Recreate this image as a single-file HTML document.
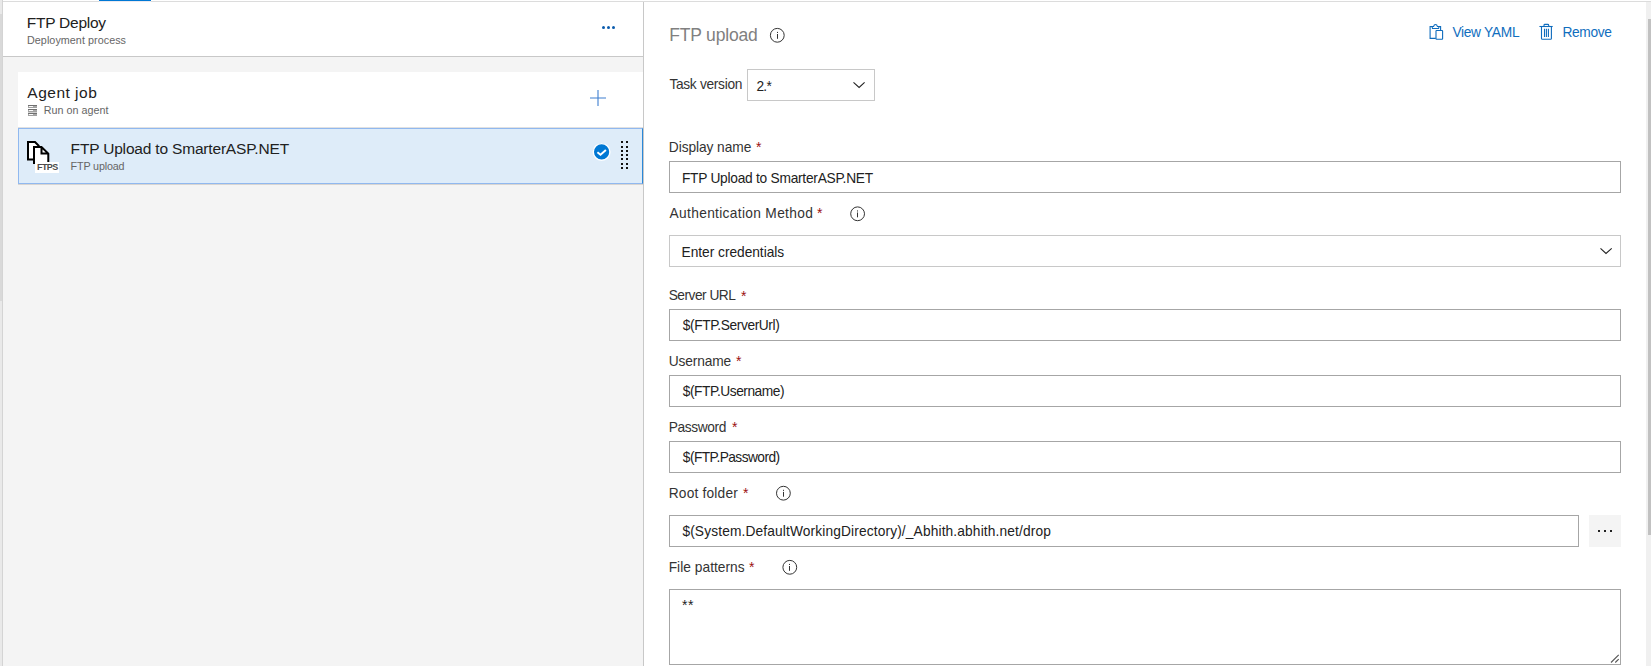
<!DOCTYPE html>
<html><head><meta charset="utf-8"><style>
html,body{margin:0;padding:0;width:1651px;height:666px;overflow:hidden;background:#fff;position:relative}
.t{position:absolute;white-space:nowrap;font-family:"Liberation Sans",sans-serif;line-height:24px}
.r{position:absolute}
</style></head><body>
<div class="r" style="left:3px;top:1px;width:1648px;height:1px;background:#dcdcdc"></div>
<div class="r" style="left:99px;top:0px;width:52px;height:1px;background:#0078d4"></div>
<div class="r" style="left:99px;top:1px;width:52px;height:1px;background:#ece9ee"></div>
<div class="r" style="left:0px;top:0px;width:2px;height:666px;background:#e9e9e9"></div>
<div class="r" style="left:0px;top:14px;width:2px;height:287px;background:#d9d9d9"></div>
<div class="r" style="left:2px;top:0px;width:1px;height:666px;background:#d4d4d4"></div>
<div class="r" style="left:3px;top:57px;width:640px;height:609px;background:#f4f4f4"></div>
<div class="r" style="left:3px;top:2px;width:640px;height:54px;background:#fff"></div>
<div class="r" style="left:3px;top:56px;width:640px;height:1px;background:#c8c8c8"></div>
<div class="t" style="left:26.8px;top:11px;font-size:15.5px;letter-spacing:-0.256px;color:#212121;">FTP Deploy</div>
<div class="t" style="left:27.0px;top:28px;font-size:10.75px;letter-spacing:0.059px;color:#666666;">Deployment process</div>
<div class="r" style="left:602.0px;top:26px;width:3px;height:3px;border-radius:50%;background:#0b5cad"></div>
<div class="r" style="left:607.0px;top:26px;width:3px;height:3px;border-radius:50%;background:#0b5cad"></div>
<div class="r" style="left:612.0px;top:26px;width:3px;height:3px;border-radius:50%;background:#0b5cad"></div>
<div class="r" style="left:643px;top:2px;width:1px;height:664px;background:#c8c8c8"></div>
<div class="r" style="left:18px;top:72px;width:625px;height:55px;background:#fff"></div>
<div class="r" style="left:18px;top:127px;width:625px;height:1px;background:#e1e1e1"></div>
<div class="t" style="left:27.3px;top:81px;font-size:15.5px;letter-spacing:0.5px;color:#212121;">Agent job</div>
<div class="t" style="left:43.7px;top:98px;font-size:10.75px;letter-spacing:0.027px;color:#666666;">Run on agent</div>
<div class="r" style="left:28px;top:105px;width:9px;height:1px;background:#707070"></div>
<div class="r" style="left:28px;top:106px;width:9px;height:1px;background:#a8a8a8"></div>
<div class="r" style="left:29px;top:106px;width:4px;height:1px;background:#fafafa"></div>
<div class="r" style="left:28px;top:107px;width:9px;height:1px;background:#a0a0a0"></div>
<div class="r" style="left:28px;top:109px;width:9px;height:1px;background:#707070"></div>
<div class="r" style="left:28px;top:110px;width:9px;height:1px;background:#a8a8a8"></div>
<div class="r" style="left:29px;top:110px;width:4px;height:1px;background:#fafafa"></div>
<div class="r" style="left:28px;top:111px;width:9px;height:1px;background:#a0a0a0"></div>
<div class="r" style="left:28px;top:113px;width:9px;height:1px;background:#707070"></div>
<div class="r" style="left:28px;top:114px;width:9px;height:1px;background:#a8a8a8"></div>
<div class="r" style="left:29px;top:114px;width:4px;height:1px;background:#fafafa"></div>
<div class="r" style="left:28px;top:115px;width:9px;height:1px;background:#a0a0a0"></div>
<div class="r" style="left:28px;top:112px;width:9px;height:1px;background:#d0d0d0"></div>
<svg class="r" style="left:586px;top:86px" width="24" height="24" viewBox="0 0 24 24"><path d="M4,12 H20 M12,4 V20" stroke="#3f7fd0" stroke-width="1.1"/></svg>
<div class="r" style="left:18px;top:128px;width:625px;height:56px;background:#deecf9;border:1px solid #90b8ef;border-right-color:#2b88d8;box-sizing:border-box"></div>
<div class="r" style="left:18px;top:184px;width:625px;height:1px;background:#d8d5d2"></div>
<div class="t" style="left:70.6px;top:137px;font-size:15.5px;letter-spacing:-0.181px;color:#212121;">FTP Upload to SmarterASP.NET</div>
<div class="t" style="left:70.6px;top:154px;font-size:10.75px;letter-spacing:-0.156px;color:#666666;">FTP upload</div>
<svg class="r" style="left:592px;top:142px" width="20" height="20" viewBox="0 0 20 20"><circle cx="9.6" cy="9.9" r="8.3" fill="#0078d4" stroke="#fff" stroke-width="1.4"/><path d="M5.4 10.2 L8.5 12.7 L13.9 8" fill="none" stroke="#fff" stroke-width="2"/></svg>
<div class="r" style="left:621px;top:141px;width:2px;height:2px;background:#111"></div>
<div class="r" style="left:626px;top:141px;width:2px;height:2px;background:#111"></div>
<div class="r" style="left:621px;top:146px;width:2px;height:2px;background:#111"></div>
<div class="r" style="left:626px;top:146px;width:2px;height:2px;background:#111"></div>
<div class="r" style="left:621px;top:150px;width:2px;height:2px;background:#111"></div>
<div class="r" style="left:626px;top:150px;width:2px;height:2px;background:#111"></div>
<div class="r" style="left:621px;top:154px;width:2px;height:2px;background:#111"></div>
<div class="r" style="left:626px;top:154px;width:2px;height:2px;background:#111"></div>
<div class="r" style="left:621px;top:158px;width:2px;height:2px;background:#111"></div>
<div class="r" style="left:626px;top:158px;width:2px;height:2px;background:#111"></div>
<div class="r" style="left:621px;top:163px;width:2px;height:2px;background:#111"></div>
<div class="r" style="left:626px;top:163px;width:2px;height:2px;background:#111"></div>
<div class="r" style="left:621px;top:167px;width:2px;height:2px;background:#111"></div>
<div class="r" style="left:626px;top:167px;width:2px;height:2px;background:#111"></div>
<svg class="r" style="left:20px;top:130px" width="50" height="50" viewBox="0 0 50 50">
<path d="M8,29.5 V12 H15 L19,16 V29.5 Z" fill="#fff"/>
<path d="M7,29.5 H13.5 M8,30.5 V11 M7,12 H15 L19.2,16.2" fill="none" stroke="#000" stroke-width="2"/>
<path d="M14,34 V17 H21.5 L28.3,23.6 V34 Z" fill="#fff"/>
<path d="M14,34 V16 M13,17 H21.5 L28.3,23.6 V32 M21.5,17 V23.6 H28.3" fill="none" stroke="#000" stroke-width="2"/>
<rect x="15" y="32" width="24" height="11" fill="#fff"/>
</svg>
<div class="t" style="left:37px;top:159px;font-size:9px;line-height:16px;font-weight:bold;letter-spacing:-0.6px;color:#4a4a4a">FTPS</div>
<div class="t" style="left:669.2px;top:23px;font-size:17.5px;letter-spacing:-0.167px;color:#808080;">FTP upload</div>
<svg class="r" style="left:768px;top:26px" width="18" height="18" viewBox="0 0 18 18"><circle cx="9.30" cy="9.30" r="6.9" fill="none" stroke="#333" stroke-width="1"/><rect x="9" y="8.00" width="1" height="4.8" fill="#333"/><rect x="9" y="5.90" width="1" height="1.1" fill="#333"/></svg>
<svg class="r" style="left:1424px;top:20px" width="24" height="24" viewBox="0 0 24 24"><g fill="none" stroke="#0f6cbd" stroke-width="1.1"><path d="M11.8,18.4 H6.1 V6.5 H9.6 C9.9,5 10.5,4.5 11.5,4.5 C12.5,4.5 13.1,5 13.4,6.5 H16.6 V10.2"/><path d="M8,6.7 L8.5,8.5 H14.6 L15.1,6.7"/><rect x="12" y="10.5" width="6.6" height="8.8" rx="0.6"/></g></svg>
<div class="t" style="left:1452.4px;top:21px;font-size:13.75px;letter-spacing:-0.3px;color:#106ebe;">View YAML</div>
<svg class="r" style="left:1534px;top:20px" width="24" height="24" viewBox="0 0 24 24"><g fill="none" stroke="#0f6cbd" stroke-width="1.1"><path d="M5.4,6.5 H18.7"/><path d="M10,6.5 V5.3 Q10,4.4 10.9,4.4 H13.8 Q14.7,4.4 14.7,5.3 V6.5"/><path d="M7.5,6.5 V18.5 Q7.5,19.3 8.3,19.3 H16.6 Q17.4,19.3 17.4,18.5 V6.5"/><path d="M10.5,8.8 V16.9 M12.4,8.8 V16.9 M14.4,8.8 V16.9"/></g></svg>
<div class="t" style="left:1562.4px;top:21px;font-size:13.75px;letter-spacing:-0.34px;color:#106ebe;">Remove</div>
<div class="t" style="left:669.4px;top:73px;font-size:13.75px;letter-spacing:-0.309px;color:#333333;">Task version</div>
<div class="r" style="left:747px;top:69px;width:128px;height:32px;border:1px solid #c8c8c8;box-sizing:border-box;background:#fff"></div>
<div class="t" style="left:756.4px;top:75px;font-size:13.75px;letter-spacing:-0.7px;color:#212121;">2.*</div>
<svg class="r" style="left:850px;top:78px" width="18" height="12" viewBox="0 0 18 12"><path d="M3.5,4.3 L9.1,9.4 L14.6,4.3" fill="none" stroke="#222" stroke-width="1.1"/></svg>
<div class="t" style="left:668.8px;top:136px;font-size:13.75px;letter-spacing:-0.073px;color:#333333;">Display name</div>
<div class="t" style="left:756px;top:135px;font-size:14px;line-height:24px;color:#9a1010">*</div>
<div class="r" style="left:669px;top:161px;width:952px;height:32px;border:1px solid #a6a6a6;box-sizing:border-box;background:#fff"></div>
<div class="t" style="left:681.9px;top:167px;font-size:13.75px;letter-spacing:-0.256px;color:#212121;">FTP Upload to SmarterASP.NET</div>
<div class="t" style="left:669.6px;top:202px;font-size:13.75px;letter-spacing:0.32px;color:#333333;">Authentication Method</div>
<div class="t" style="left:817px;top:201px;font-size:14px;line-height:24px;color:#9a1010">*</div>
<svg class="r" style="left:848px;top:204px" width="18" height="18" viewBox="0 0 18 18"><circle cx="9.60" cy="9.80" r="6.9" fill="none" stroke="#333" stroke-width="1"/><rect x="9" y="8.50" width="1" height="4.8" fill="#333"/><rect x="9" y="6.40" width="1" height="1.1" fill="#333"/></svg>
<div class="r" style="left:669px;top:235px;width:952px;height:32px;border:1px solid #c8c8c8;box-sizing:border-box;background:#fff"></div>
<div class="t" style="left:681.6px;top:241px;font-size:13.75px;letter-spacing:-0.038px;color:#212121;">Enter credentials</div>
<svg class="r" style="left:1597px;top:244px" width="18" height="12" viewBox="0 0 18 12"><path d="M3.5,4.3 L9,9.4 L14.7,4.3" fill="none" stroke="#222" stroke-width="1.1"/></svg>
<div class="t" style="left:668.7px;top:284px;font-size:13.75px;letter-spacing:-0.511px;color:#333333;">Server URL</div>
<div class="t" style="left:741px;top:284px;font-size:14px;line-height:24px;color:#9a1010">*</div>
<div class="r" style="left:669px;top:309px;width:952px;height:32px;border:1px solid #a6a6a6;box-sizing:border-box;background:#fff"></div>
<div class="t" style="left:682.8px;top:314px;font-size:13.75px;letter-spacing:-0.393px;color:#212121;">$(FTP.ServerUrl)</div>
<div class="t" style="left:668.7px;top:350px;font-size:13.75px;letter-spacing:-0.143px;color:#333333;">Username</div>
<div class="t" style="left:736px;top:349px;font-size:14px;line-height:24px;color:#9a1010">*</div>
<div class="r" style="left:669px;top:375px;width:952px;height:32px;border:1px solid #a6a6a6;box-sizing:border-box;background:#fff"></div>
<div class="t" style="left:682.8px;top:380px;font-size:13.75px;letter-spacing:-0.464px;color:#212121;">$(FTP.Username)</div>
<div class="t" style="left:668.7px;top:416px;font-size:13.75px;letter-spacing:-0.371px;color:#333333;">Password</div>
<div class="t" style="left:732px;top:415px;font-size:14px;line-height:24px;color:#9a1010">*</div>
<div class="r" style="left:669px;top:441px;width:952px;height:32px;border:1px solid #a6a6a6;box-sizing:border-box;background:#fff"></div>
<div class="t" style="left:682.8px;top:446px;font-size:13.75px;letter-spacing:-0.564px;color:#212121;">$(FTP.Password)</div>
<div class="t" style="left:668.7px;top:482px;font-size:13.75px;letter-spacing:0.19px;color:#333333;">Root folder</div>
<div class="t" style="left:743px;top:481px;font-size:14px;line-height:24px;color:#9a1010">*</div>
<svg class="r" style="left:774px;top:484px" width="18" height="18" viewBox="0 0 18 18"><circle cx="9.40" cy="9.20" r="6.9" fill="none" stroke="#333" stroke-width="1"/><rect x="9" y="7.90" width="1" height="4.8" fill="#333"/><rect x="9" y="5.80" width="1" height="1.1" fill="#333"/></svg>
<div class="r" style="left:669px;top:515px;width:910px;height:32px;border:1px solid #a6a6a6;box-sizing:border-box;background:#fff"></div>
<div class="t" style="left:682.4px;top:520px;font-size:13.75px;letter-spacing:0.129px;color:#212121;">$(System.DefaultWorkingDirectory)/_Abhith.abhith.net/drop</div>
<div class="r" style="left:1589px;top:515px;width:32px;height:32px;background:#f4f4f4"></div>
<div class="r" style="left:1598px;top:530px;width:2px;height:2px;background:#222"></div>
<div class="r" style="left:1604px;top:530px;width:2px;height:2px;background:#222"></div>
<div class="r" style="left:1610px;top:530px;width:2px;height:2px;background:#222"></div>
<div class="t" style="left:668.7px;top:556px;font-size:13.75px;letter-spacing:0.025px;color:#333333;">File patterns</div>
<div class="t" style="left:749px;top:555px;font-size:14px;line-height:24px;color:#9a1010">*</div>
<svg class="r" style="left:780px;top:558px" width="18" height="18" viewBox="0 0 18 18"><circle cx="9.80" cy="9.30" r="6.9" fill="none" stroke="#333" stroke-width="1"/><rect x="9" y="8.00" width="1" height="4.8" fill="#333"/><rect x="9" y="5.90" width="1" height="1.1" fill="#333"/></svg>
<div class="r" style="left:669px;top:589px;width:952px;height:76px;border:1px solid #a6a6a6;box-sizing:border-box;background:#fff"></div>
<div class="t" style="left:682px;top:593px;font-size:14px;line-height:24px;color:#212121;letter-spacing:0.6px">**</div>
<svg class="r" style="left:1608px;top:652px" width="12" height="12" viewBox="0 0 12 12"><path d="M3,10.5 L10.7,2.8 M7.3,10.5 L10.7,7.1" stroke="#555" stroke-width="1.1"/></svg>
<div class="r" style="left:1646px;top:2px;width:5px;height:664px;background:#f0f0f0"></div>
<div class="r" style="left:1648px;top:19px;width:3px;height:516px;background:#c1c1c1"></div>
</body></html>
